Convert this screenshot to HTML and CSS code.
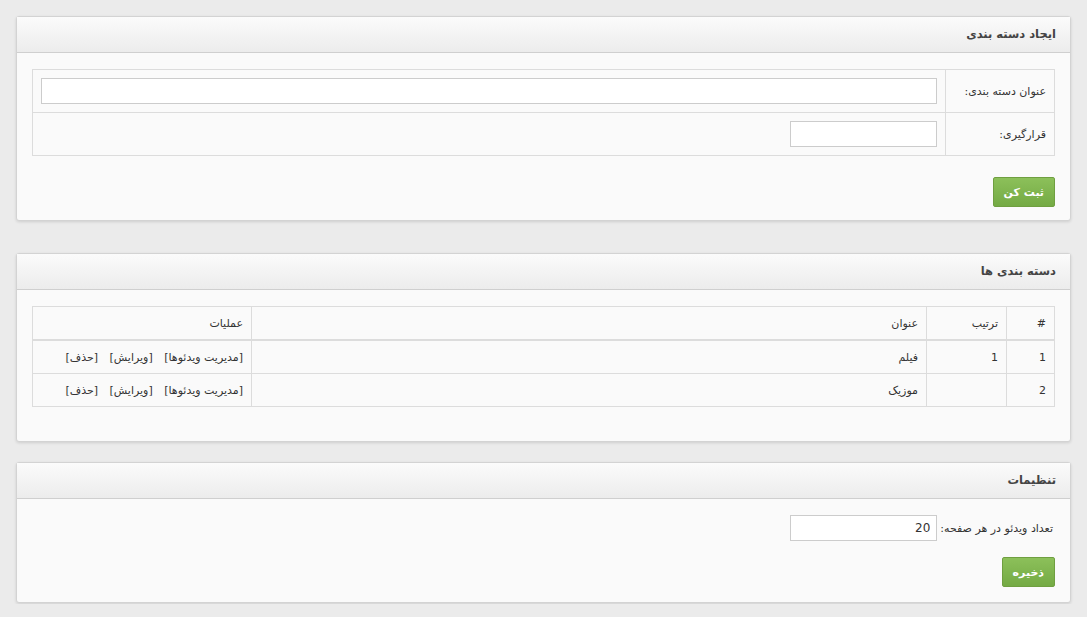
FILE: index.html
```html
<!DOCTYPE html>
<html lang="fa" dir="rtl">
<head>
  <meta charset="UTF-8" />
  <title>دسته بندی ها</title>
  <link rel="stylesheet" href="styles.css">
</head>
<body>
  <div class="box box-create">
    <div class="box-head">ایجاد دسته بندی</div>
    <div class="box-body">
      <table class="form-table">
        <tr>
          <th>عنوان دسته بندی:</th>
          <td><input type="text" class="input-wide" /></td>
        </tr>
        <tr>
          <th>قرارگیری:</th>
          <td><input type="text" class="input-small" /></td>
        </tr>
      </table>
      <button class="btn">ثبت کن</button>
    </div>
  </div>

  <div class="box box-list">
    <div class="box-head">دسته بندی ها</div>
    <div class="box-body">
      <table class="grid">
        <thead>
          <tr>
            <th class="col-num">#</th>
            <th class="col-order">ترتیب</th>
            <th>عنوان</th>
            <th class="col-ops">عملیات</th>
          </tr>
        </thead>
        <tbody>
          <tr>
            <td>1</td>
            <td>1</td>
            <td>فیلم</td>
            <td><a href="#">[مدیریت ویدئوها]</a> <a href="#">[ویرایش]</a> <a href="#">[حذف]</a></td>
          </tr>
          <tr>
            <td>2</td>
            <td></td>
            <td>موزیک</td>
            <td><a href="#">[مدیریت ویدئوها]</a> <a href="#">[ویرایش]</a> <a href="#">[حذف]</a></td>
          </tr>
        </tbody>
      </table>
    </div>
  </div>

  <div class="box box-settings">
    <div class="box-head">تنظیمات</div>
    <div class="box-body">
      <div class="field">
        <label>تعداد ویدئو در هر صفحه:</label>
        <input type="text" class="input-num" value="20" />
      </div>
      <button class="btn">ذخیره</button>
    </div>
  </div>
</body>
</html>
```

FILE: styles.css
```css
body {
  margin: 0;
  padding: 16px 16px 1px;
  background: #ebebeb;
  font-family: Tahoma, "DejaVu Sans", sans-serif;
  font-size: 11px;
  color: #333;
}

.box {
  background: #fafafa;
  border: 1px solid #d3d3d3;
  border-radius: 3px;
  box-shadow: 0 1px 3px rgba(0, 0, 0, 0.12);
}

.box-create {
  margin-bottom: 32px;
}

.box-list {
  margin-bottom: 20px;
}

.box-head {
  height: 35px;
  line-height: 35px;
  padding: 0 14px;
  font-weight: bold;
  font-size: 11.5px;
  color: #444;
  background: linear-gradient(#fbfbfb, #ececec);
  border-bottom: 1px solid #cfcfcf;
}

.box-body {
  padding: 16px 15px 14px;
}

.box-create .box-body {
  padding-bottom: 13px;
}

.box-settings .box-body {
  padding-bottom: 15px;
}

input {
  box-sizing: border-box;
  height: 26px;
  border: 1px solid #ccc;
  background: #fff;
  font-family: "DejaVu Sans", sans-serif;
  font-size: 12px;
  color: #333;
  padding: 0 6px;
  outline: none;
}

.form-table {
  width: 100%;
  border-collapse: collapse;
  margin-bottom: 21px;
}

.form-table th,
.form-table td {
  border: 1px solid #dcdcdc;
  height: 42px;
  padding: 0 8px;
}

.form-table th {
  width: 92px;
  text-align: right;
  font-weight: normal;
}

.input-wide {
  width: 100%;
}

.input-small {
  width: 147px;
}

.btn {
  display: block;
  height: 30px;
  padding: 0 10px;
  border: 1px solid #6f9f40;
  border-radius: 2px;
  background: linear-gradient(#8cc05a, #74aa44);
  color: #fff;
  font-family: Tahoma, "DejaVu Sans", sans-serif;
  font-size: 11px;
  font-weight: bold;
  cursor: pointer;
}

.grid {
  width: 100%;
  border-collapse: collapse;
  margin-bottom: 20px;
}

.grid th,
.grid td {
  border: 1px solid #dcdcdc;
  padding: 0 8px;
  text-align: right;
  font-weight: normal;
  height: 32px;
}

.grid thead th {
  height: 32px;
  border-bottom: 2px solid #dcdcdc;
}

.col-num {
  width: 31px;
}

.col-order {
  width: 63px;
}

.col-ops {
  width: 202px;
}

.grid a {
  color: #333;
  text-decoration: none;
  margin-left: 8px;
}

.field {
  display: flex;
  align-items: center;
  gap: 3px;
  padding-right: 2px;
  margin-bottom: 16px;
}

.input-num {
  width: 147px;
  height: 26px;
}
```
